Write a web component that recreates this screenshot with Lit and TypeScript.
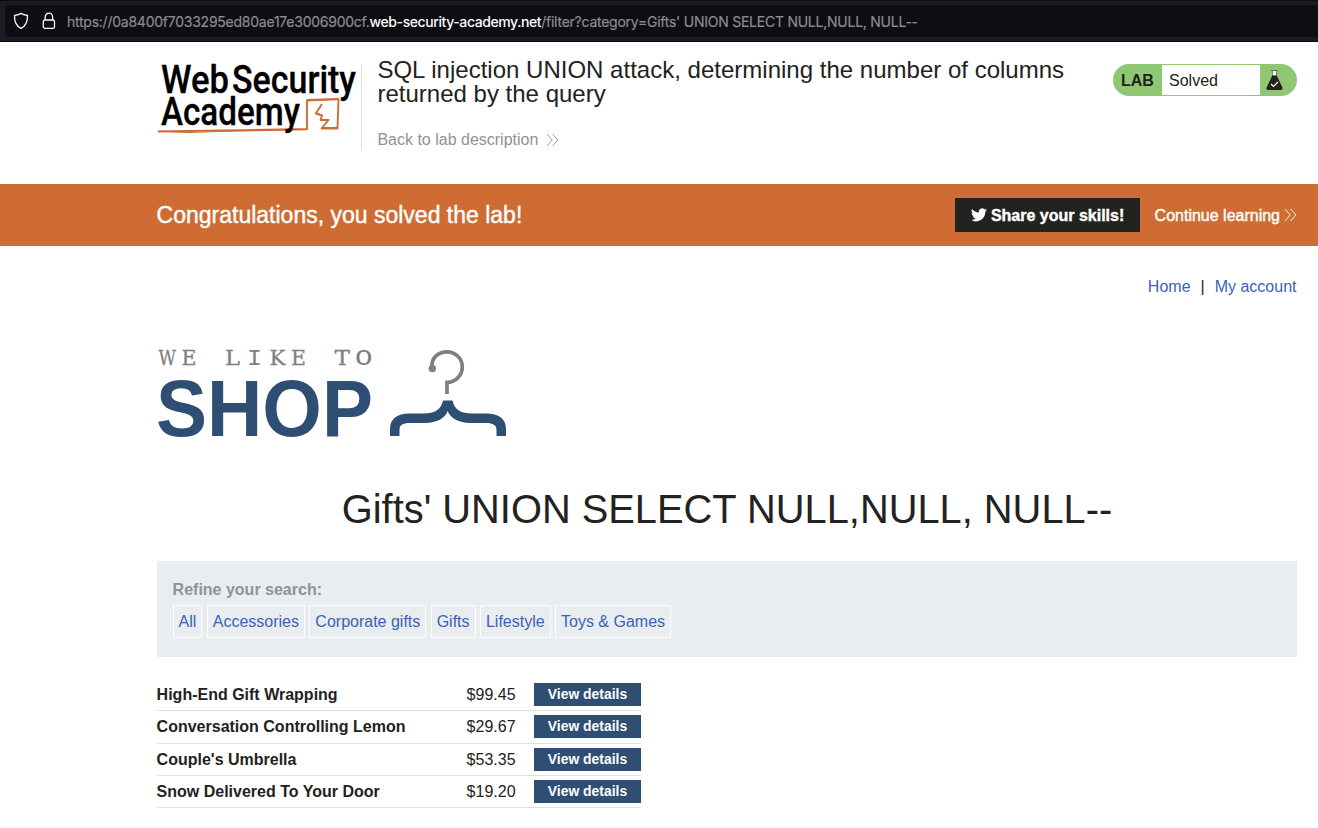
import { LitElement, html, css, svg } from "lit";
import { customElement } from "lit/decorators.js";

const categories = ["All", "Accessories", "Corporate gifts", "Gifts", "Lifestyle", "Toys & Games"];

const products = [
  { name: "High-End Gift Wrapping", price: "$99.45" },
  { name: "Conversation Controlling Lemon", price: "$29.67" },
  { name: "Couple's Umbrella", price: "$53.35" },
  { name: "Snow Delivered To Your Door", price: "$19.20" },
];

// Letters of the typewriter tagline: glyph, left edge, advance width, family.
const tagline: [string, number, number, string][] = [
  ["W", 1.5, 17.5, "slab"],
  ["E", 24.5, 15, "slab"],
  ["L", 68, 15, "slab"],
  ["I", 90, 15, "mono"],
  ["K", 112.5, 16, "slab"],
  ["E", 134, 15, "slab"],
  ["T", 177.5, 15.5, "slab"],
  ["O", 198, 17.5, "mono"],
];

const chevrons = html`<svg class="chevrons" width="13" height="14" viewBox="0 0 13 14">
  <path d="M1 1l5.200 6L1 13M6.600 1l5.200 6-5.200 6" fill="none" stroke="currentColor" stroke-width="0.900" />
</svg>`;

@customElement("app-root")
export class AppRoot extends LitElement {
  static styles = css`
    :host {
      display: block;
      height: 828px;
      overflow: hidden;
      background: #fff;
      color: #222221;
      font: 16px/20px "Liberation Sans", Arial, sans-serif;
    }
    * { box-sizing: border-box; }
    svg { display: block; flex: none; overflow: visible; }
    a { color: inherit; text-decoration: none; white-space: nowrap; }
    .browser {
      height: 42px;
      padding: 4px 0 4px 5px;
      background: #1c1b22;
      border-top: 1px solid #0c0c0d;
      border-bottom: 1px solid #08080a;
    }
    .address {
      height: 32px;
      display: flex;
      align-items: center;
      background: #0e0d12;
      border-radius: 4px 0 0 4px;
      padding-left: 8px;
      color: #8b8b90;
      font: 14px/20px Inter, sans-serif;
      white-space: pre;
    }
    .lock { margin: 0 11px 0 13px; }
    .url { padding-top: 2px; letter-spacing: -0.245px; -webkit-text-stroke: 0.200px currentColor; }
    .url b { color: #fbfbfe; font-weight: 500; letter-spacing: -0.410px; -webkit-text-stroke: 0; }
    .header {
      height: 142px;
      padding: 16px 21px 0 157px;
      display: flex;
      align-items: flex-start;
    }
    .brand { height: 92px; width: 205px; padding-top: 7px; }
    .intro { display: flex; margin-top: 7px; height: 85px; border-left: 1px solid #ddd; padding-left: 15.400px; margin-left: -1px; }
    .intro-body { margin-top: -7px; width: 710px; }
    .title { margin: 0; font-size: 24px; line-height: 24px; font-weight: 400; letter-spacing: 0.010px; }
    .back { display: inline-flex; align-items: center; gap: 8px; margin-top: 24px; color: #929292; }
    .status {
      margin: 6px 0 0 auto;
      width: 184px;
      height: 32px;
      display: flex;
      align-items: stretch;
      background: #8fc772;
      border-radius: 16px;
      line-height: 32px;
    }
    .lab { width: 49px; padding-left: 8px; font-weight: 700; line-height: 34px; }
    .state { width: 98px; margin: 1px 0; background: #fff; padding-left: 7px; line-height: 31px; }
    .flask { margin: 6px 0 0 5.500px; }
    .banner {
      height: 62px;
      background: #cf6c33;
      color: #fff;
      padding: 0 21px 0 156.600px;
      display: flex;
      align-items: center;
      -webkit-text-stroke: 0.400px currentColor;
    }
    .congrats { font-size: 23px; margin: 0 auto 0 0; font-weight: 400; }
    .share {
      width: 185px;
      height: 34px;
      background: #222221;
      display: flex;
      align-items: center;
      justify-content: center;
      gap: 4px;
      font-weight: 700;
      margin-right: 15px;
      padding-left: 1px;
    }
    .share span, .continue span { padding-top: 2px; }
    .continue { display: flex; align-items: center; gap: 4px; }
    .page { padding: 0 21px 0 157px; }
    .nav { height: 81px; padding: 31px 0.500px 0 0; display: flex; justify-content: flex-end; gap: 10px; }
    .link { color: #3a63b3; }
    .shop-logo { margin-top: 13px; }
    .heading { margin: 37px 0 0; font-size: 39.850px; line-height: 64px; font-weight: 400; text-align: center; }
    .filters { margin-top: 20px; height: 96px; background: #e9edf0; padding: 19px 16px 0 15.600px; }
    .filters-label { color: #929292; font-weight: 700; }
    .filter-list { display: flex; gap: 4.450px; margin-top: 5px; }
    .filter { height: 33px; padding: 0 4.980px; border: 1px solid #fff; line-height: 31px; color: #3a63b3; }
    .products { width: 484px; margin-top: 21.800px; }
    .row {
      display: grid;
      grid-template-columns: 309.600px 67.400px 107px;
      height: 32.400px;
      padding-top: 4px;
      border-bottom: 1px solid #dfdfdf;
      line-height: 23px;
    }
    .name { font-weight: 700; text-indent: -0.400px; }
    .price { padding-top: 0.300px; }
    .details { background: #2e4e73; color: #fff; font-weight: 700; font-size: 13.900px; text-align: center; height: 23px; }
    .brand-text { font-family: Roboto, sans-serif; font-weight: 500; font-size: 38px; fill: #000; stroke: #000; stroke-width: 0.300px; }
    .slab { font-family: "DejaVu Serif", serif; font-size: 21px; fill: #808080; stroke: #808080; stroke-width: 0.300px; }
    .mono { font-family: "Liberation Mono", monospace; font-size: 22.500px; fill: #808080; }
    .shop { font-family: "Liberation Sans", sans-serif; font-weight: 700; font-size: 80px; fill: #2e4e73; }
  `;

  render() {
    return html`
      <div class="browser">
        <div class="address">
          <svg width="16" height="18" viewBox="0 0 16 18">
            <path d="M8 1.400C6.200 2.700 3.800 3.200 1.500 3.500 1.300 9.800 3.200 14 8 16.300 12.800 14 14.700 9.800 14.500 3.500 12.200 3.200 9.800 2.700 8 1.400Z"
              fill="none" stroke="#fbfbfe" stroke-width="1.300" stroke-linejoin="round" />
          </svg>
          <svg class="lock" width="14" height="18" viewBox="0 0 14 18">
            <rect x="1.300" y="8" width="11.200" height="8.400" rx="1.700" fill="none" stroke="#fbfbfe" stroke-width="1.300" />
            <path d="M3.200 8V4.800a3.700 3.700 0 0 1 7.400 0V8" fill="none" stroke="#fbfbfe" stroke-width="1.300" />
          </svg>
          <span class="url">https://0a8400f7033295ed80ae17e3006900cf.<b>web-security-academy.net</b>/filter?category=Gifts' UNION SELECT NULL,NULL, NULL--</span>
        </div>
      </div>

      <header class="header">
        <div class="brand">
          <svg width="202" height="72" viewBox="0 0 202 72">
            <path d="M1 66.500Q75 65.500 150 64L150 35 181.500 34 180.500 63.500 164.500 63.500 171.500 55 163.500 55 165 50.500 158.800 48.500 165 39" fill="none" stroke="#cf6c33" stroke-width="1.900" stroke-linejoin="round" />
            <path d="M2 66.200Q30 68.300 60 66.500L149 64.600M151 36L181 34.500M164.500 54.500h7M165 62.500l15.500 0.200M160 48l5 2.500" fill="none" stroke="#cf6c33" stroke-width="1.200" />
            <text class="brand-text" x="4" y="28" textLength="68" lengthAdjust="spacingAndGlyphs">Web</text>
            <text class="brand-text" x="75" y="28" textLength="124" lengthAdjust="spacingAndGlyphs">Security</text>
            <text class="brand-text" x="4" y="60" textLength="139" lengthAdjust="spacingAndGlyphs">Academy</text>
          </svg>
        </div>
        <div class="intro">
          <div class="intro-body">
            <h2 class="title">SQL injection UNION attack, determining the number of columns returned by the query</h2>
            <a class="back">Back to lab description ${chevrons}</a>
          </div>
        </div>
        <div class="status">
          <span class="lab">LAB</span>
          <span class="state">Solved</span>
          <svg class="flask" width="18" height="20" viewBox="0 0 18 20">
            <path d="M5 0.500h7M6.500 1v5M10.500 1v5" fill="none" stroke="#555" stroke-width="0.800" />
            <path d="M6.800 1h3.400v4.500H6.800z" fill="#fff" />
            <path d="M6.300 5.500h4.400l5.700 12q.700 2.500-1.400 2.500h-13q-2.100 0-1.400-2.500z" fill="#222221" />
            <path d="M5 14l2.500 2.500 4.500-4.500" fill="none" stroke="#fff" stroke-width="1.200" />
          </svg>
        </div>
      </header>

      <section class="banner">
        <h4 class="congrats">Congratulations, you solved the lab!</h4>
        <a class="share">
          <svg width="16" height="14" viewBox="0 0 24 20">
            <path fill="#fff" d="M24 2.400a10 10 0 0 1-2.800.8A5 5 0 0 0 23.300.400a10 10 0 0 1-3.100 1.200A4.900 4.900 0 0 0 11.800 6.100 14 14 0 0 1 1.700.900 4.900 4.900 0 0 0 3.200 7.500 5 5 0 0 1 1 6.900a4.900 4.900 0 0 0 3.900 4.900 5 5 0 0 1-2.200.1 4.900 4.900 0 0 0 4.600 3.400A10 10 0 0 1 0 17.300 14 14 0 0 0 21.500 4.900 10 10 0 0 0 24 2.400z" />
          </svg>
          <span>Share your skills!</span>
        </a>
        <a class="continue"><span>Continue learning</span> ${chevrons}</a>
      </section>

      <main class="page">
        <nav class="nav"><a class="link">Home</a><span>|</span><a class="link">My account</a></nav>

        <svg class="shop-logo" width="352" height="100" viewBox="0 0 352 100">
          ${tagline.map(([glyph, x, width, family]) => svg`
            <text class=${family} x=${x} y="25.200" textLength=${width} lengthAdjust="spacingAndGlyphs">${glyph}</text>`)}
          <text class="shop" x="-1" y="96" textLength="217" lengthAdjust="spacingAndGlyphs">SHOP</text>
          <path d="M275 28C274 18 281 11.800 290 11.800a15.300 15.300 0 0 1 0 30.600V54" fill="none" stroke="#808080" stroke-width="3.700" />
          <circle cx="275.300" cy="28.500" r="3.700" fill="#808080" />
          <path d="M286 60.500h9.500C297.500 70 304 73.500 315 73.500h14C342 73.500 349 79 349 89v7h-9.500v-6C339.500 85 336 83 329 83H313C302 82.500 293.500 78.500 290.700 71 288 78.500 279.500 82.500 268.500 83H252.500C245.500 83 242.500 85 242.500 90v6H233v-7C233 79 240 73.500 252.500 73.500h14C277.500 73.500 284 70 286 60.500z" fill="#2e4e73" />
        </svg>

        <h1 class="heading">Gifts' UNION SELECT NULL,NULL, NULL--</h1>

        <section class="filters">
          <div class="filters-label">Refine your search:</div>
          <div class="filter-list">${categories.map((c) => html`<a class="filter">${c}</a>`)}</div>
        </section>

        <section class="products">
          ${products.map((p) => html`
            <div class="row">
              <span class="name">${p.name}</span>
              <span class="price">${p.price}</span>
              <a class="details">View details</a>
            </div>`)}
        </section>
      </main>
    `;
  }
}
